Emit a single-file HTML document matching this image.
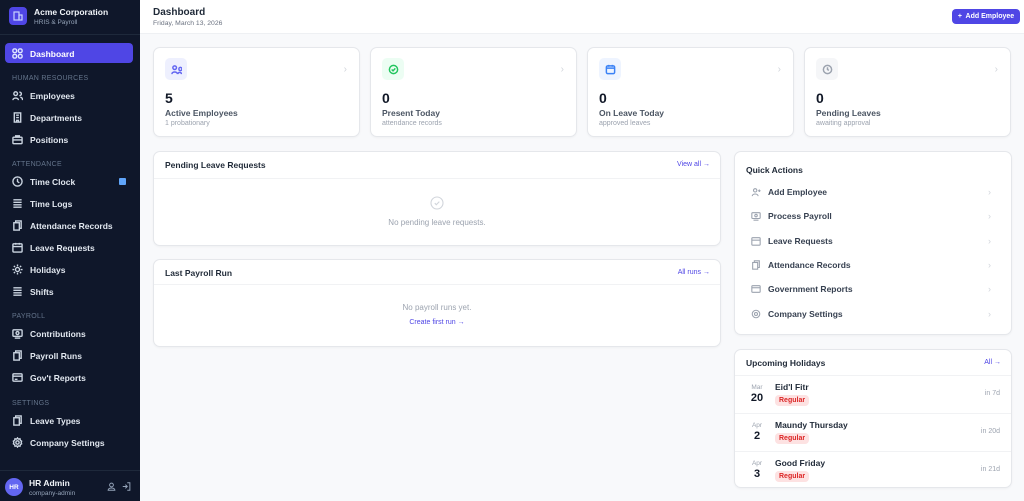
<!DOCTYPE html>
<html><head><meta charset="utf-8"><style>
*{box-sizing:border-box;margin:0;padding:0}
body{width:1024px;height:501px;overflow:hidden;font-family:"Liberation Sans",sans-serif;background:#f8f9fb;position:relative;color:#111827}
.sb{position:absolute;left:0;top:0;width:140px;height:501px;background:#0f172a;color:#e2e8f0}
.a{position:absolute}
.nav{position:absolute;left:12px;font-size:8.5px;font-weight:bold;color:#e2e8f0;display:flex;align-items:center;gap:7px}
.nav svg{width:11px;height:11px;stroke:#cbd5e1;fill:none;stroke-width:1.5}
.sec{position:absolute;left:12px;font-size:7px;color:#64748b;letter-spacing:.3px}
.card{position:absolute;background:#fff;border:1px solid #e5e7eb;border-radius:7px;box-shadow:0 1px 2px rgba(0,0,0,.04)}
.ic{position:absolute;left:11px;top:10px;width:22px;height:22px;border-radius:5px;display:flex;align-items:center;justify-content:center}
.ic svg{width:11px;height:11px;fill:none;stroke-width:1.6}
.num{position:absolute;left:11px;top:42px;font-size:14px;font-weight:bold;color:#111827}
.lab{position:absolute;left:11px;top:60px;font-size:8.5px;font-weight:bold;color:#4b5563}
.sub{position:absolute;left:11px;top:72px;font-size:7px;color:#9ca3af}
.chev{position:absolute;right:12px;top:16px;font-size:10px;color:#d1d5db}
.ht{position:absolute;left:11px;font-size:8.5px;font-weight:bold;color:#1f2937}
.lnk{position:absolute;right:10px;font-size:7px;color:#4f46e5}
.qa{position:absolute;left:16px;font-size:8.5px;font-weight:bold;color:#374151;display:flex;align-items:center;gap:7px}
.qa svg{width:10px;height:10px;stroke:#9ca3af;fill:none;stroke-width:1.3}
.qc{position:absolute;right:20px;font-size:9px;color:#d1d5db}
.hr{position:absolute;left:0;right:0;height:1px;background:#f1f2f4}
.badge{display:block;background:#fde2e2;color:#dc2626;font-size:7px;font-weight:bold;padding:2px 4px;border-radius:4px;line-height:1}
</style></head><body>
<div class="sb">
 <div class="a" style="left:9px;top:7px;width:18px;height:18px;background:#4f46e5;border-radius:4px"><svg viewBox="0 0 18 18" width="18" height="18" fill="none" stroke="#c7d2fe" stroke-width="1.2"><rect x="5" y="5" width="5" height="8"/><rect x="10" y="8" width="3" height="5"/></svg></div>
 <div class="a" style="left:34px;top:7px;font-size:8.5px;font-weight:bold;color:#f1f5f9">Acme Corporation</div>
 <div class="a" style="left:34px;top:19px;font-size:6.5px;color:#94a3b8">HRIS &amp; Payroll</div>
 <div class="a" style="left:0;top:34px;width:140px;height:1px;background:#1e293b"></div>
 <div class="a" style="left:5px;top:43px;width:128px;height:20px;background:#4f46e5;border-radius:4px"></div>
 <div class="nav" style="top:48px;color:#fff"><svg viewBox="0 0 12 12" style="stroke:#e0e7ff"><rect x="1" y="1" width="4" height="4" rx="1.5"/><rect x="7" y="1" width="4" height="4" rx="1.5"/><rect x="1" y="7" width="4" height="4" rx="1.5"/><rect x="7" y="7" width="4" height="4" rx="1.5"/></svg>Dashboard</div>
 <div class="sec" style="top:75px">HUMAN RESOURCES</div>
 <div class="nav" style="top:90px"><svg viewBox="0 0 12 12"><circle cx="4" cy="4" r="2"/><path d="M1 11c0-3 6-3 6 0M8 2.5a1.8 1.8 0 1 1 0 3.5M9 8c2 0 2.5 1.5 2.5 3"/></svg>Employees</div>
 <div class="nav" style="top:112px"><svg viewBox="0 0 12 12"><rect x="2.5" y="1" width="7" height="10"/><path d="M4.5 3.5h3M4.5 6h3M5 11V9h2v2"/></svg>Departments</div>
 <div class="nav" style="top:134px"><svg viewBox="0 0 12 12"><rect x="1" y="3.5" width="10" height="7" rx="1"/><path d="M4 3.5V2h4v1.5M1 6.5h10"/></svg>Positions</div>
 <div class="sec" style="top:161px">ATTENDANCE</div>
 <div class="nav" style="top:176px"><svg viewBox="0 0 12 12"><circle cx="6" cy="6" r="5"/><path d="M6 3v3l2 1.5"/></svg>Time Clock</div>
 <div class="a" style="left:119px;top:178px;width:7px;height:7px;background:#60a5fa;border-radius:1px"></div>
 <div class="nav" style="top:198px"><svg viewBox="0 0 12 12"><path d="M1.5 2h9M1.5 4.7h9M1.5 7.4h9M1.5 10h9"/></svg>Time Logs</div>
 <div class="nav" style="top:220px"><svg viewBox="0 0 12 12"><rect x="2" y="3" width="6" height="8"/><path d="M4 3V1h6v8H8"/></svg>Attendance Records</div>
 <div class="nav" style="top:242px"><svg viewBox="0 0 12 12"><rect x="1" y="2" width="10" height="9" rx="1"/><path d="M1 5h10M4 1v2M8 1v2"/></svg>Leave Requests</div>
 <div class="nav" style="top:264px"><svg viewBox="0 0 12 12"><circle cx="6" cy="6" r="2.2"/><path d="M6 .5v2M6 9.5v2M.5 6h2M9.5 6h2M2 2l1.3 1.3M8.7 8.7 10 10M2 10l1.3-1.3M8.7 3.3 10 2"/></svg>Holidays</div>
 <div class="nav" style="top:286px"><svg viewBox="0 0 12 12"><path d="M1.5 2h9M1.5 4.7h9M1.5 7.4h9M1.5 10h9"/></svg>Shifts</div>
 <div class="sec" style="top:313px">PAYROLL</div>
 <div class="nav" style="top:328px"><svg viewBox="0 0 12 12"><rect x="1" y="2" width="10" height="7" rx="1"/><circle cx="6" cy="5.5" r="1.6"/><path d="M3 11h6"/></svg>Contributions</div>
 <div class="nav" style="top:350px"><svg viewBox="0 0 12 12"><rect x="2" y="3" width="6" height="8"/><path d="M4 3V1h6v8H8"/></svg>Payroll Runs</div>
 <div class="nav" style="top:372px"><svg viewBox="0 0 12 12"><rect x="1" y="2" width="10" height="8" rx="1"/><path d="M1 4.5h10M3 8h3"/></svg>Gov't Reports</div>
 <div class="sec" style="top:400px">SETTINGS</div>
 <div class="nav" style="top:415px"><svg viewBox="0 0 12 12"><rect x="2" y="3" width="6" height="8"/><path d="M4 3V1h6v8H8"/></svg>Leave Types</div>
 <div class="nav" style="top:437px"><svg viewBox="0 0 12 12"><circle cx="6" cy="6" r="1.8"/><path d="M6 1l1 1.3 1.7-.4.4 1.7L10.5 4.5 10 6l.5 1.5-1.4.9-.4 1.7L7 9.7 6 11 5 9.7l-1.7.4-.4-1.7L1.5 7.5 2 6l-.5-1.5 1.4-.9.4-1.7L5 2.3z"/></svg>Company Settings</div>
 <div class="a" style="left:0;top:470px;width:140px;height:1px;background:#1e293b"></div>
 <div class="a" style="left:5px;top:478px;width:18px;height:18px;border-radius:50%;background:#6366f1;color:#fff;font-size:6.5px;font-weight:bold;display:flex;align-items:center;justify-content:center">HR</div>
 <div class="a" style="left:29px;top:478px;font-size:8.5px;font-weight:bold;color:#f1f5f9">HR Admin</div>
 <div class="a" style="left:29px;top:490px;font-size:6.5px;color:#94a3b8">company-admin</div>
 <svg class="a" style="left:107px;top:482px" width="9" height="9" viewBox="0 0 12 12" fill="none" stroke="#94a3b8" stroke-width="1.3"><circle cx="6" cy="4" r="2.5"/><path d="M1.5 11c0-4 9-4 9 0z"/></svg>
 <svg class="a" style="left:122px;top:482px" width="9" height="9" viewBox="0 0 12 12" fill="none" stroke="#94a3b8" stroke-width="1.3"><path d="M7 1h3.5v10H7M1 6h6M4.5 3.5 7 6 4.5 8.5"/></svg>
</div>

<div class="a" style="left:140px;top:0;width:884px;height:34px;background:#fff;border-bottom:1px solid #eef0f3"></div>
<div class="a" style="left:153px;top:7px;font-size:10px;font-weight:bold;color:#1f2937">Dashboard</div>
<div class="a" style="left:153px;top:20px;font-size:6.8px;color:#6b7280">Friday, March 13, 2026</div>
<div class="a" style="left:952px;top:9px;width:68px;height:15px;background:#4f46e5;border-radius:4px;color:#fff;font-size:7px;font-weight:bold;display:flex;align-items:center;justify-content:center">+&nbsp; Add Employee</div>

<div class="card" style="left:153px;top:47px;width:207px;height:90px"><div class="ic" style="background:#eef0fe"><svg viewBox="0 0 12 12" stroke="#6366f1"><circle cx="4" cy="4" r="2"/><path d="M1 11c0-3 6-3 6 0M8.5 5.5a1.7 1.7 0 1 0 0-.1M7.5 11c0-2.5 4-2.5 4 0"/></svg></div><div class="chev">›</div><div class="num">5</div><div class="lab">Active Employees</div><div class="sub">1 probationary</div></div>
<div class="card" style="left:370px;top:47px;width:207px;height:90px"><div class="ic" style="background:#ecfdf3"><svg viewBox="0 0 12 12" stroke="#22c55e"><circle cx="6" cy="6" r="4.5"/><path d="M4 6l1.5 1.5L8 4.8"/></svg></div><div class="chev">›</div><div class="num">0</div><div class="lab">Present Today</div><div class="sub">attendance records</div></div>
<div class="card" style="left:587px;top:47px;width:207px;height:90px"><div class="ic" style="background:#eef4ff"><svg viewBox="0 0 12 12" stroke="#3b82f6"><rect x="1.5" y="2" width="9" height="8.5" rx="1.5"/><path d="M1.5 4.5h9M4 1v2M8 1v2"/></svg></div><div class="chev">›</div><div class="num">0</div><div class="lab">On Leave Today</div><div class="sub">approved leaves</div></div>
<div class="card" style="left:804px;top:47px;width:207px;height:90px"><div class="ic" style="background:#f5f6f8"><svg viewBox="0 0 12 12" stroke="#9ca3af"><circle cx="6" cy="6" r="4.5"/><path d="M6 3.5V6l1.5 1"/></svg></div><div class="chev">›</div><div class="num">0</div><div class="lab">Pending Leaves</div><div class="sub">awaiting approval</div></div>

<div class="card" style="left:153px;top:151px;width:568px;height:95px"><div class="ht" style="top:8px">Pending Leave Requests</div><div class="lnk" style="top:9px">View all →</div><div class="hr" style="top:26px"></div>
<svg class="a" style="left:276px;top:44px" width="14" height="14" viewBox="0 0 14 14" fill="none" stroke="#d1d5db" stroke-width="1.1"><circle cx="7" cy="7" r="6"/><path d="M4.8 7.2l1.5 1.5L9.3 5.6"/></svg>
<div class="a" style="left:0;right:0;top:66px;text-align:center;font-size:8px;color:#9ca3af">No pending leave requests.</div></div>

<div class="card" style="left:153px;top:259px;width:568px;height:88px"><div class="ht" style="top:8px">Last Payroll Run</div><div class="lnk" style="top:9px">All runs →</div><div class="hr" style="top:24px"></div>
<div class="a" style="left:0;right:0;top:43px;text-align:center;font-size:8px;color:#9ca3af">No payroll runs yet.</div>
<div class="a" style="left:0;right:0;top:59px;text-align:center;font-size:7px;color:#4f46e5">Create first run →</div></div>

<div class="card" style="left:734px;top:151px;width:278px;height:184px"><div class="ht" style="top:13px">Quick Actions</div>
<div class="qa" style="top:35px"><svg viewBox="0 0 12 12"><circle cx="5" cy="4" r="2"/><path d="M1.5 11c0-3.5 7-3.5 7 0M10 3v3M8.5 4.5h3"/></svg>Add Employee</div><div class="qc" style="top:35px">›</div>
<div class="qa" style="top:59px"><svg viewBox="0 0 12 12"><rect x="1" y="2" width="10" height="7" rx="1"/><circle cx="6" cy="5.5" r="1.5"/><path d="M3 11h6"/></svg>Process Payroll</div><div class="qc" style="top:59px">›</div>
<div class="qa" style="top:84px"><svg viewBox="0 0 12 12"><rect x="1" y="2" width="10" height="9" rx="1"/><path d="M1 5h10"/></svg>Leave Requests</div><div class="qc" style="top:84px">›</div>
<div class="qa" style="top:108px"><svg viewBox="0 0 12 12"><rect x="2" y="3" width="6" height="8"/><path d="M4 3V1h6v8H8"/></svg>Attendance Records</div><div class="qc" style="top:108px">›</div>
<div class="qa" style="top:132px"><svg viewBox="0 0 12 12"><rect x="1" y="2" width="10" height="8" rx="1"/><path d="M1 4.5h10"/></svg>Government Reports</div><div class="qc" style="top:132px">›</div>
<div class="qa" style="top:157px"><svg viewBox="0 0 12 12"><circle cx="6" cy="6" r="1.8"/><circle cx="6" cy="6" r="4.5"/></svg>Company Settings</div><div class="qc" style="top:157px">›</div></div>

<div class="card" style="left:734px;top:349px;width:278px;height:139px"><div class="ht" style="top:8px">Upcoming Holidays</div><div class="lnk" style="top:9px">All →</div>
<div class="hr" style="top:25px"></div><div class="hr" style="top:63px"></div><div class="hr" style="top:101px"></div>
<div class="a" style="left:12px;top:34px;width:20px;text-align:center;font-size:6.5px;color:#9ca3af">Mar</div><div class="a" style="left:12px;top:42px;width:20px;text-align:center;font-size:11px;font-weight:bold;color:#111827">20</div>
<div class="a" style="left:40px;top:32px;font-size:8.5px;font-weight:bold;color:#1f2937">Eid'l Fitr</div><span class="a badge" style="left:40px;top:45px">Regular</span><div class="a" style="right:11px;top:40px;font-size:7px;color:#9ca3af">in 7d</div>
<div class="a" style="left:12px;top:72px;width:20px;text-align:center;font-size:6.5px;color:#9ca3af">Apr</div><div class="a" style="left:12px;top:80px;width:20px;text-align:center;font-size:11px;font-weight:bold;color:#111827">2</div>
<div class="a" style="left:40px;top:70px;font-size:8.5px;font-weight:bold;color:#1f2937">Maundy Thursday</div><span class="a badge" style="left:40px;top:83px">Regular</span><div class="a" style="right:11px;top:78px;font-size:7px;color:#9ca3af">in 20d</div>
<div class="a" style="left:12px;top:110px;width:20px;text-align:center;font-size:6.5px;color:#9ca3af">Apr</div><div class="a" style="left:12px;top:118px;width:20px;text-align:center;font-size:11px;font-weight:bold;color:#111827">3</div>
<div class="a" style="left:40px;top:108px;font-size:8.5px;font-weight:bold;color:#1f2937">Good Friday</div><span class="a badge" style="left:40px;top:121px">Regular</span><div class="a" style="right:11px;top:116px;font-size:7px;color:#9ca3af">in 21d</div>
</div>
</body></html>
